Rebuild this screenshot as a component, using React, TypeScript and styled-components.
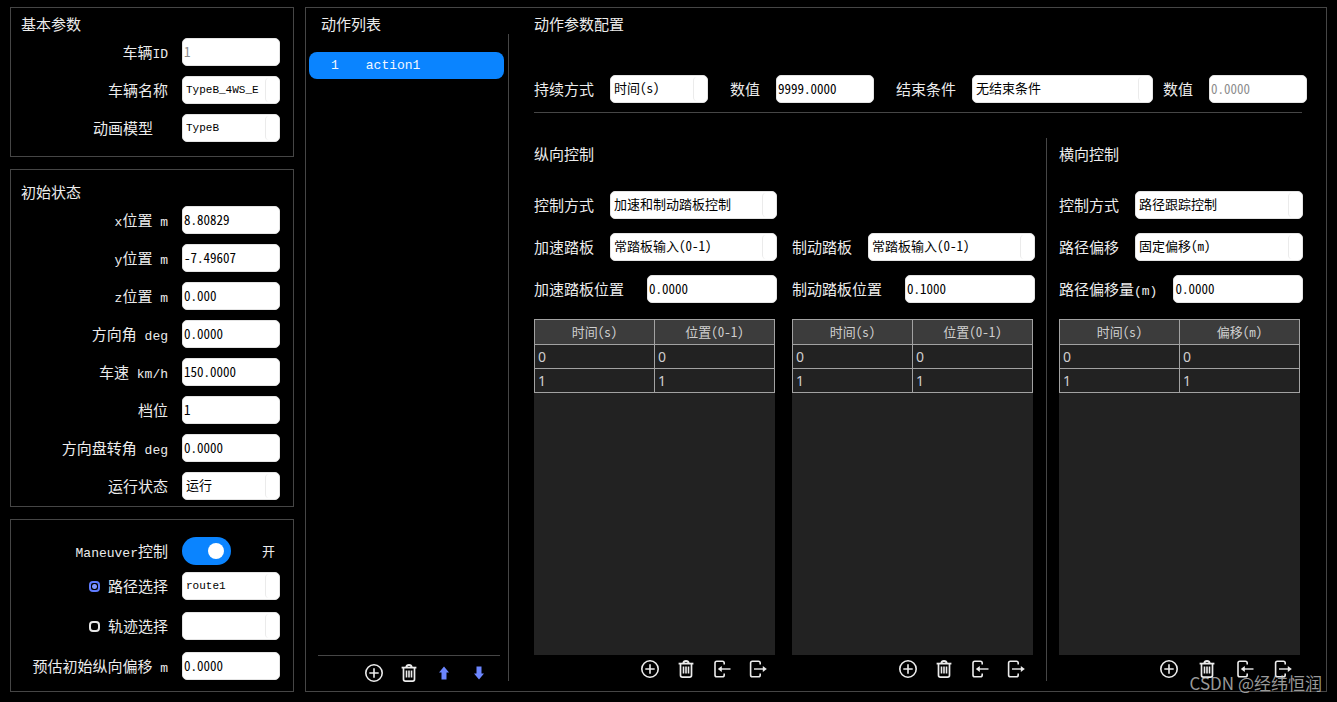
import React, { useState } from "react";
import styled, { createGlobalStyle, css } from "styled-components";

const CJK = '"Noto Sans CJK SC", "Liberation Sans", sans-serif';
const MONO = '"Liberation Mono", "Noto Sans CJK SC", monospace';

const GlobalStyle = createGlobalStyle`
  * { box-sizing: border-box; }
  body {
    margin: 0;
    background: #000;
    color: #ececec;
    font-family: ${CJK};
    font-size: 15px;
    line-height: 28px;
  }
`;

const Page = styled.main`
  position: relative;
  display: flex;
  gap: 11px;
  min-height: 100vh;
  padding: 7px 10px 10px;
`;

const Sidebar = styled.div`
  display: flex;
  flex-direction: column;
  flex: none;
  gap: 12px;
  width: 284px;
`;

const Panel = styled.section<{ $pad: string }>`
  border: 1px solid #464646;
  padding: ${(p) => p.$pad};
`;

const Title = styled.h2`
  margin: 0;
  font-size: 15px;
  font-weight: 400;
  line-height: 28px;
  white-space: nowrap;
`;

const PanelTitle = styled(Title)`
  padding-left: 10px;
`;

const Rows = styled.div<{ $gap: number }>`
  display: flex;
  flex-direction: column;
  gap: ${(p) => p.$gap}px;
`;

const SideRow = styled.div`
  display: flex;
  align-items: center;
  justify-content: flex-end;
  gap: 14px;
  height: 28px;
  padding-right: 13px;
`;

const Label = styled.label`
  flex: none;
  height: 28px;
  line-height: 28px;
  white-space: pre;
`;

const Latin = styled.span`
  font-family: ${MONO};
  font-size: 13px;
  line-height: 1;
`;

const controlStyle = css`
  appearance: none;
  display: block;
  width: 100%;
  height: 28px;
  margin: 0;
  border: 1px solid #e4e4e4;
  border-radius: 5px;
  background: #fff;
  color: #000;
  font-family: ${CJK};
  font-feature-settings: "hwid";
  font-size: 13px;
  line-height: 24px;
  outline: none;
`;

const Sized = styled.div<{ $width?: number }>`
  position: relative;
  ${(p) => (p.$width ? `flex: none; width: ${p.$width}px;` : "flex: 1; min-width: 0;")}
`;

const TextBox = styled.input`
  ${controlStyle}
  padding: 0 0 2px 1px;
  &:disabled { color: #8c8c8c; }
`;

const DropDown = styled.select<{ $latin?: boolean }>`
  ${controlStyle}
  padding: 0 14px 2px 3px;
  ${(p) => p.$latin && `padding-bottom: 0; font-family: ${MONO}; font-size: 11px;`}
`;

const SelectBox = styled(Sized)`
  &::after {
    content: "";
    position: absolute;
    top: 2px;
    right: 1px;
    bottom: 2px;
    width: 13px;
    border-left: 1px solid #ebebeb;
    border-radius: 4px;
    pointer-events: none;
  }
`;

const Radio = styled.input`
  appearance: none;
  width: 11px;
  height: 11px;
  margin: 0 8px 0 0;
  border: 2px solid #e6e6e6;
  border-radius: 4px;
  vertical-align: 0;
  &:checked {
    border-color: #5f7cff;
    background: radial-gradient(circle, #7f96ff 0 2px, #000 3px);
  }
`;

const SwitchCell = styled(Sized)`
  display: flex;
  align-items: center;
  justify-content: space-between;
  padding-right: 5px;
  font-size: 13px;
`;

const Switch = styled.input`
  appearance: none;
  display: flex;
  align-items: center;
  width: 49px;
  height: 28px;
  margin: 0;
  padding: 0 7px;
  border-radius: 14px;
  background: #555;
  &::before {
    content: "";
    width: 16px;
    height: 16px;
    border-radius: 50%;
    background: #fff;
  }
  &:checked {
    justify-content: flex-end;
    background: #0a84ff;
  }
`;

const Workspace = styled.section`
  display: flex;
  flex: 1;
  min-width: 0;
  border: 1px solid #464646;
  padding-top: 2px;
`;

const ActionColumn = styled.div`
  display: flex;
  flex-direction: column;
  flex: none;
  width: 202px;
  padding-bottom: 8px;
`;

const ActionTitle = styled(Title)`
  padding-left: 15px;
`;

const ActionList = styled.ul`
  flex: 1;
  margin: 14px 4px 0 3px;
  padding: 0;
  list-style: none;
`;

const ActionButton = styled.button`
  display: flex;
  align-items: center;
  gap: 27px;
  width: 100%;
  height: 27px;
  padding: 0 22px;
  border: 0;
  border-radius: 8px;
  background: #0a84ff;
  color: #f2f7ff;
  font-family: ${MONO};
  font-size: 13px;
`;

const Toolbar = styled.div<{ $gap: number }>`
  display: flex;
  justify-content: flex-end;
  gap: ${(p) => p.$gap}px;
  padding: 4px 9px 2px 0;
`;

const ActionToolbar = styled(Toolbar)`
  margin: 0 8px 0 12px;
  border-top: 1px solid #464646;
  padding: 7px 11px 0 0;
`;

const IconButton = styled.button`
  display: block;
  width: 20px;
  height: 20px;
  padding: 0;
  border: 0;
  background: none;
  color: #ececec;
  svg { display: block; }
`;

const VerticalRule = styled.div<{ $inset?: boolean }>`
  flex: none;
  width: 1px;
  margin: ${(p) => (p.$inset ? "24px 0 10px" : "0")};
  background: #464646;
`;

const Config = styled.div`
  display: flex;
  flex: 1;
  flex-direction: column;
  min-width: 0;
  padding: 0 24px 10px 25px;
`;

const ParamRow = styled.div`
  display: flex;
  gap: 22px;
  margin: 37px -5px 0 0;
`;

const Field = styled.div<{ $grow?: boolean }>`
  display: flex;
  align-items: center;
  gap: 16px;
  flex: ${(p) => (p.$grow ? "1 1 0" : "none")};
`;

const EndGroup = styled.div`
  display: flex;
  flex: 1;
  gap: 10px;
`;

const Rule = styled.hr`
  width: 100%;
  height: 1px;
  margin: 9px 0 25px;
  border: 0;
  background: #464646;
`;

const Controls = styled.div`
  display: flex;
  flex: 1;
`;

const ControlColumn = styled.section`
  display: flex;
  flex: 1 1 0;
  flex-direction: column;
  min-width: 0;
  padding-top: 2px;
`;

const ColumnGap = styled.div<{ $width: number }>`
  flex: none;
  width: ${(p) => p.$width}px;
`;

const ControlFields = styled.div`
  display: grid;
  grid-template-rows: repeat(3, 28px);
  row-gap: 14px;
  margin: 23px 0 16px;
`;

const ControlRow = styled.div<{ $row: number }>`
  display: flex;
  grid-row: ${(p) => p.$row};
  align-items: center;
  justify-content: space-between;
  gap: 16px;
`;

const TableArea = styled.div`
  flex: 1;
  margin-right: 2px;
  background: #222;
`;

const DataTable = styled.table`
  width: 100%;
  border-collapse: collapse;
  table-layout: fixed;
  color: #cfcfcf;
  th, td { border: 1px solid #a2a2a2; padding: 0 3px; }
  th {
    height: 25px;
    background: #3c3c3c;
    font-feature-settings: "hwid";
    font-size: 13px;
    font-weight: 400;
    line-height: 24px;
  }
  td {
    height: 24px;
    font-family: "Noto Sans", sans-serif;
    font-size: 14px;
    line-height: 22px;
  }
`;

const Watermark = styled.div`
  position: absolute;
  right: 15px;
  bottom: 5px;
  color: rgba(205, 205, 205, 0.75);
  font-size: 17px;
  pointer-events: none;
`;

const AddIcon = () => (
  <svg width="20" height="20" viewBox="0 0 20 20" fill="none" stroke="currentColor" strokeWidth="1.6">
    <circle cx="10" cy="10" r="8.2" />
    <path d="M10 5.3v9.4M5.3 10h9.4" />
  </svg>
);

const TrashIcon = () => (
  <svg width="20" height="20" viewBox="0 0 20 20" fill="none" stroke="currentColor" strokeWidth="1.7">
    <path d="M2.6 4.6h14.8" strokeWidth="1.8" />
    <path d="M7.4 4.2Q7.6 1.9 10 1.9T12.6 4.2" strokeWidth="2" />
    <path d="M4.5 5v11.2q0 1.9 1.9 1.9h7.2q1.9 0 1.9-1.9V5" />
    <path d="M7.5 7.5v7M10 7.5v7M12.5 7.5v7" strokeWidth="1.6" />
  </svg>
);

const ImportIcon = () => (
  <svg width="20" height="20" viewBox="0 0 20 20" fill="none" stroke="currentColor" strokeWidth="1.6">
    <path d="M12.2 5.6V4q0-1.8-1.8-1.8H4.8Q3 2.2 3 4v12q0 1.8 1.8 1.8h5.6q1.8 0 1.8-1.8v-1.6" />
    <path d="M8.5 10h10" strokeWidth="1.4" />
    <path d="M5.8 10l4-3v6z" fill="currentColor" stroke="none" />
  </svg>
);

const ExportIcon = () => (
  <svg width="20" height="20" viewBox="0 0 20 20" fill="none" stroke="currentColor" strokeWidth="1.6">
    <path d="M12.2 5.6V4q0-1.8-1.8-1.8H4.4Q2.6 2.2 2.6 4v12q0 1.8 1.8 1.8h6q1.8 0 1.8-1.8v-1.6" />
    <path d="M6 10h10" strokeWidth="1.4" />
    <path d="M18.8 10l-4-3v6z" fill="currentColor" stroke="none" />
  </svg>
);

const UpIcon = () => (
  <svg width="20" height="20" viewBox="0 0 20 20" fill="#6c86ff">
    <path d="M10 3.6l5 6h-2.5v6.8h-5V9.6H5z" />
  </svg>
);

const DownIcon = () => (
  <svg width="20" height="20" viewBox="0 0 20 20" fill="#6c86ff">
    <path d="M10 16.4l5-6h-2.5V3.6h-5v6.8H5z" />
  </svg>
);

/* Sets runs of Latin letters and units in the monospaced face. */
const Mixed = ({ text }: { text: string }) => (
  <>
    {text.split(/([\x20-\x7e]+)/).map((part, i) => (i % 2 ? <Latin key={i}>{part}</Latin> : part))}
  </>
);

type ControlProps = { id: string; value: string; width?: number; disabled?: boolean };

const TextField = ({ id, value, width, disabled }: ControlProps) => (
  <Sized $width={width}>
    <TextBox id={id} defaultValue={value} disabled={disabled} />
  </Sized>
);

const SelectField = ({ id, value, width }: ControlProps) => (
  <SelectBox $width={width}>
    <DropDown id={id} defaultValue={value} $latin={/^[\x20-\x7e]+$/.test(value)}>
      <option value={value}>{value}</option>
    </DropDown>
  </SelectBox>
);

type FieldSpec = { id: string; label: string; value: string; select?: boolean; disabled?: boolean };

const SideField = ({ id, label, value, select, disabled }: FieldSpec) => (
  <SideRow>
    <Label htmlFor={id}><Mixed text={label} /></Label>
    {select
      ? <SelectField id={id} value={value} width={98} />
      : <TextField id={id} value={value} width={98} disabled={disabled} />}
  </SideRow>
);

const basics: FieldSpec[] = [
  { id: "vehicle-id", label: "车辆ID", value: "1", disabled: true },
  { id: "vehicle-name", label: "车辆名称", value: "TypeB_4WS_E", select: true },
  { id: "model", label: "动画模型\u3000", value: "TypeB", select: true },
];

const initial: FieldSpec[] = [
  { id: "pos-x", label: "x位置 m", value: "8.80829" },
  { id: "pos-y", label: "y位置 m", value: "-7.49607" },
  { id: "pos-z", label: "z位置 m", value: "0.000" },
  { id: "heading", label: "方向角 deg", value: "0.0000" },
  { id: "speed", label: "车速 km/h", value: "150.0000" },
  { id: "gear", label: "档位", value: "1" },
  { id: "steer", label: "方向盘转角 deg", value: "0.0000" },
  { id: "state", label: "运行状态", value: "运行", select: true },
];

type ColumnSpec = {
  title: string;
  fields: (FieldSpec & { row: number })[];
  head: string[];
  gap: number;
};

const columns: ColumnSpec[] = [
  {
    title: "纵向控制",
    gap: 16,
    head: ["时间(s)", "位置(0-1)"],
    fields: [
      { row: 1, id: "lon-mode", label: "控制方式", value: "加速和制动踏板控制", select: true },
      { row: 2, id: "gas", label: "加速踏板", value: "常踏板输入(0-1)", select: true },
      { row: 3, id: "gas-pos", label: "加速踏板位置", value: "0.0000" },
    ],
  },
  {
    title: "\u00a0",
    gap: 16,
    head: ["时间(s)", "位置(0-1)"],
    fields: [
      { row: 2, id: "brake", label: "制动踏板", value: "常踏板输入(0-1)", select: true },
      { row: 3, id: "brake-pos", label: "制动踏板位置", value: "0.1000" },
    ],
  },
  {
    title: "横向控制",
    gap: 18,
    head: ["时间(s)", "偏移(m)"],
    fields: [
      { row: 1, id: "lat-mode", label: "控制方式", value: "路径跟踪控制", select: true },
      { row: 2, id: "offset", label: "路径偏移", value: "固定偏移(m)", select: true },
      { row: 3, id: "offset-value", label: "路径偏移量(m)", value: "0.0000" },
    ],
  },
];

const Column = ({ title, fields, head, gap }: ColumnSpec) => (
  <ControlColumn>
    <Title as={title.trim() ? "h3" : "div"}>{title}</Title>
    <ControlFields>
      {fields.map((f) => (
        <ControlRow key={f.id} $row={f.row}>
          <Label htmlFor={f.id}><Mixed text={f.label} /></Label>
          {f.select
            ? <SelectField id={f.id} value={f.value} />
            : <TextField id={f.id} value={f.value} width={130} />}
        </ControlRow>
      ))}
    </ControlFields>
    <TableArea>
      <DataTable>
        <thead>
          <tr>{head.map((h) => <th key={h} scope="col">{h}</th>)}</tr>
        </thead>
        <tbody>
          {["0", "1"].map((v) => <tr key={v}><td>{v}</td><td>{v}</td></tr>)}
        </tbody>
      </DataTable>
    </TableArea>
    <Toolbar $gap={gap}>
      <IconButton aria-label="添加"><AddIcon /></IconButton>
      <IconButton aria-label="删除"><TrashIcon /></IconButton>
      <IconButton aria-label="导入"><ImportIcon /></IconButton>
      <IconButton aria-label="导出"><ExportIcon /></IconButton>
    </Toolbar>
  </ControlColumn>
);

export default function App() {
  const [on, setOn] = useState(true);
  const [source, setSource] = useState("route");
  return (
    <>
      <GlobalStyle />
      <Page>
        <Sidebar>
          <Panel $pad="2px 0 14px">
            <PanelTitle>基本参数</PanelTitle>
            <Rows $gap={10}>{basics.map((f) => <SideField key={f.id} {...f} />)}</Rows>
          </Panel>
          <Panel $pad="8px 0 6px">
            <PanelTitle>初始状态</PanelTitle>
            <Rows $gap={10}>{initial.map((f) => <SideField key={f.id} {...f} />)}</Rows>
          </Panel>
          <Panel $pad="17px 0 11px">
            <Rows $gap={7}>
              <SideRow>
                <Label htmlFor="maneuver"><Mixed text="Maneuver控制" /></Label>
                <SwitchCell $width={98}>
                  <Switch id="maneuver" type="checkbox" role="switch" checked={on} onChange={() => setOn(!on)} />
                  <span>{on ? "开" : "关"}</span>
                </SwitchCell>
              </SideRow>
              <Rows $gap={12}>
                <SideRow>
                  <Label>
                    <Radio type="radio" name="source" checked={source === "route"} onChange={() => setSource("route")} />
                    路径选择
                  </Label>
                  <SelectField id="route" value="route1" width={98} />
                </SideRow>
                <SideRow>
                  <Label>
                    <Radio type="radio" name="source" checked={source === "track"} onChange={() => setSource("track")} />
                    轨迹选择
                  </Label>
                  <SelectField id="track" value="" width={98} />
                </SideRow>
                <SideField id="lon-offset" label="预估初始纵向偏移 m" value="0.0000" />
              </Rows>
            </Rows>
          </Panel>
        </Sidebar>

        <Workspace>
          <ActionColumn>
            <ActionTitle>动作列表</ActionTitle>
            <ActionList>
              <li><ActionButton><span>1</span><span>action1</span></ActionButton></li>
            </ActionList>
            <ActionToolbar $gap={15}>
              <IconButton aria-label="添加"><AddIcon /></IconButton>
              <IconButton aria-label="删除"><TrashIcon /></IconButton>
              <IconButton aria-label="上移"><UpIcon /></IconButton>
              <IconButton aria-label="下移"><DownIcon /></IconButton>
            </ActionToolbar>
          </ActionColumn>
          <VerticalRule $inset />
          <Config>
            <Title>动作参数配置</Title>
            <ParamRow>
              <Field>
                <Label htmlFor="duration">持续方式</Label>
                <SelectField id="duration" value="时间(s)" width={98} />
              </Field>
              <Field>
                <Label htmlFor="duration-value">数值</Label>
                <TextField id="duration-value" value="9999.0000" width={98} />
              </Field>
              <EndGroup>
                <Field $grow>
                  <Label htmlFor="end">结束条件</Label>
                  <SelectField id="end" value="无结束条件" />
                </Field>
                <Field>
                  <Label htmlFor="end-value">数值</Label>
                  <TextField id="end-value" value="0.0000" width={98} disabled />
                </Field>
              </EndGroup>
            </ParamRow>
            <Rule />
            <Controls>
              <Column {...columns[0]} />
              <ColumnGap $width={15} />
              <Column {...columns[1]} />
              <ColumnGap $width={11} />
              <VerticalRule />
              <ColumnGap $width={12} />
              <Column {...columns[2]} />
            </Controls>
          </Config>
        </Workspace>
        <Watermark>CSDN @经纬恒润</Watermark>
      </Page>
    </>
  );
}
